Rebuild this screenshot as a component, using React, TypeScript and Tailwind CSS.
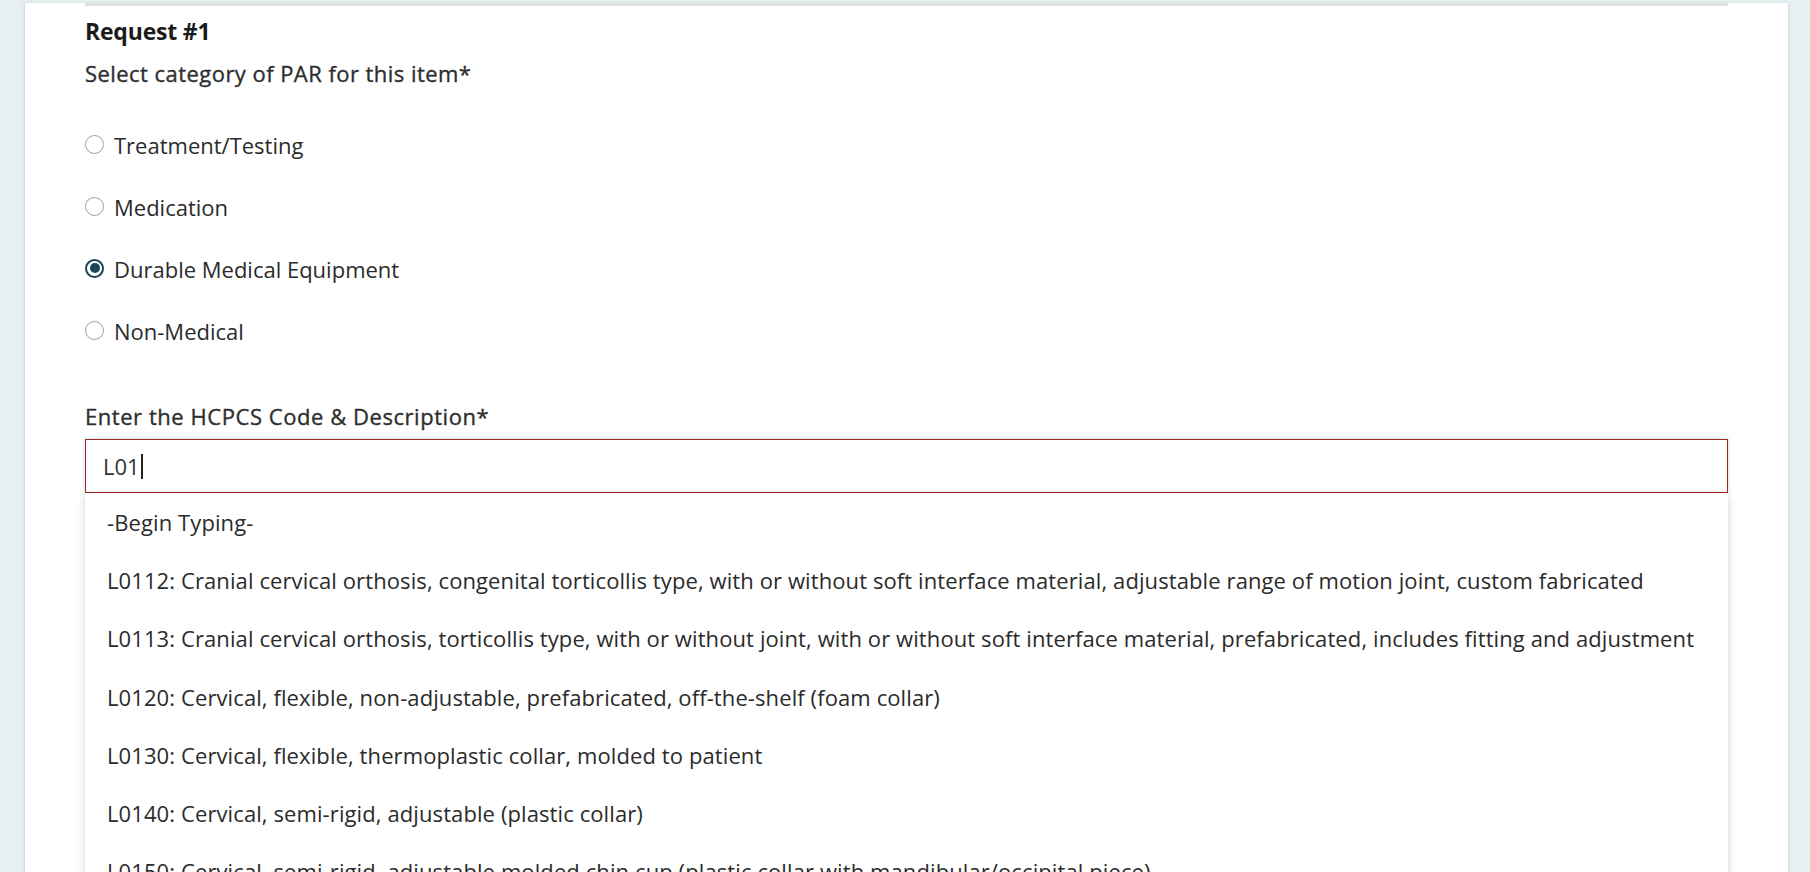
import React from "react";

const font = { fontFamily: "'Open Sans', Lato, sans-serif" };

const categories = [
  { label: "Treatment/Testing", checked: false },
  { label: "Medication", checked: false },
  { label: "Durable Medical Equipment", checked: true },
  { label: "Non-Medical", checked: false },
];

const options = [
  "-Begin Typing-",
  "L0112: Cranial cervical orthosis, congenital torticollis type, with or without soft interface material, adjustable range of motion joint, custom fabricated",
  "L0113: Cranial cervical orthosis, torticollis type, with or without joint, with or without soft interface material, prefabricated, includes fitting and adjustment",
  "L0120: Cervical, flexible, non-adjustable, prefabricated, off-the-shelf (foam collar)",
  "L0130: Cervical, flexible, thermoplastic collar, molded to patient",
  "L0140: Cervical, semi-rigid, adjustable (plastic collar)",
  "L0150: Cervical, semi-rigid, adjustable molded chin cup (plastic collar with mandibular/occipital piece)",
];

function Radio({ checked }: { checked: boolean }) {
  return (
    <span
      className={
        checked
          ? "w-[19px] h-[19px] rounded-full border-2 border-[#1b4656] flex items-center justify-center shrink-0 bg-white -mt-[2px]"
          : "w-[19px] h-[19px] rounded-full border border-[#a0a0a0] shrink-0 bg-white -mt-[2px]"
      }
    >
      {checked && <span className="w-[10px] h-[10px] rounded-full bg-[#1b4656]" />}
    </span>
  );
}

export default function App() {
  return (
    <div className="w-full h-[872px] overflow-hidden bg-[#e6eff1]" style={font}>
      <div className="ml-[24px] w-[1765px] h-full bg-white border-x border-[#d5dcdf] px-[60px] shadow-[0_0_3px_rgba(0,0,0,0.08)]">
        <div className="mt-[3px] h-[3px] bg-[#e0e0e0]" />

        <h3 className="mt-[13px] text-[23px] leading-[24px] font-bold text-[#1b1b1b] tracking-[-0.2px]">Request #1</h3>
        <p className="mt-[18px] text-[22px] leading-[24px] text-[#2e2e2e] tracking-[0.45px] [-webkit-text-stroke:0.35px_#2e2e2e]">
          Select category of PAR for this item*
        </p>

        {/* Category radios */}
        <div className="mt-[29px] flex flex-col">
          {categories.map((c) => (
            <label key={c.label} className="h-[62px] flex items-center gap-[10px] text-[22px] text-[#2b2b2b]">
              <Radio checked={c.checked} />
              <span>{c.label}</span>
            </label>
          ))}
        </div>

        <p className="mt-[42px] text-[22px] leading-[24px] text-[#2e2e2e] tracking-[0.55px] [-webkit-text-stroke:0.35px_#2e2e2e]">
          Enter the HCPCS Code &amp; Description*
        </p>

        {/* Autocomplete */}
        <div className="mt-[11px] relative">
          <div className="h-[54px] border border-[#a3281c] flex items-center pl-[17px] text-[22px] text-[#333] shadow-[0_0_4px_rgba(120,180,220,0.5)]">
            <span>L01</span>
            <span className="w-[2px] h-[25px] bg-[#222] ml-[1px]" />
          </div>
          <ul className="bg-white shadow-[0_3px_8px_rgba(0,0,0,0.18)]">
            {options.map((o) => (
              <li
                key={o}
                className="h-[58.3px] flex items-center pl-[22px] text-[22px] tracking-[0.1px] text-[#2b2b2b] whitespace-nowrap"
              >
                {o}
              </li>
            ))}
          </ul>
        </div>
      </div>
    </div>
  );
}
